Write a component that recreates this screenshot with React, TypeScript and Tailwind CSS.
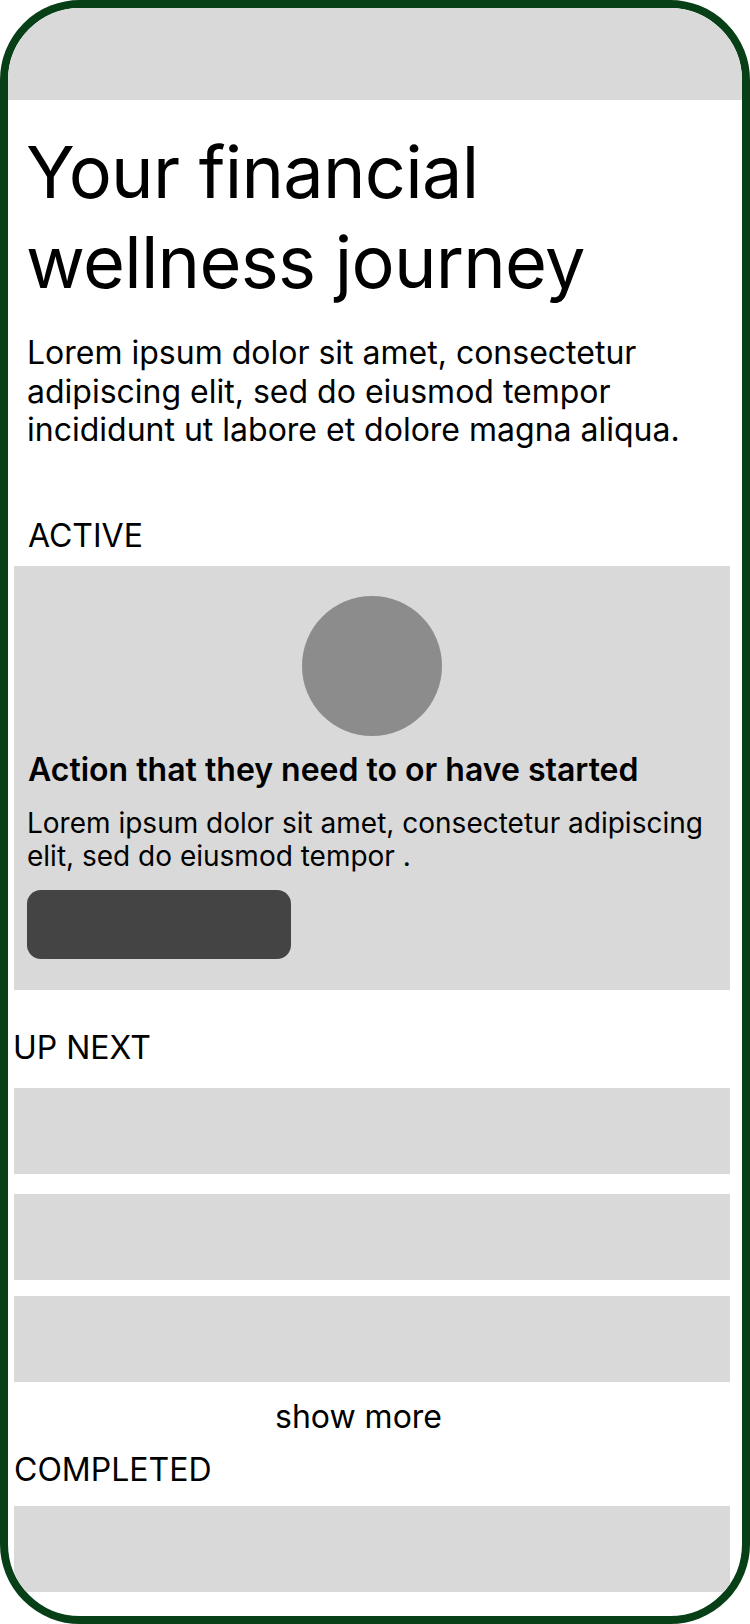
/**
 * JourneyScreen — financial wellness journey wireframe (active / up next / completed).
 */

const FONT = "font-['Inter',_'Noto_Sans',_sans-serif]";

function Placeholder({ className = "" }: { readonly className?: string }): React.ReactElement {
  return <div className={`ml-[6px] w-[716px] bg-[#d9d9d9] ${className}`} />;
}

function SectionLabel({
  children,
  className = "",
}: {
  readonly children: React.ReactNode;
  readonly className?: string;
}): React.ReactElement {
  return <p className={`text-[32px] leading-[36px] text-black ${className}`}>{children}</p>;
}

function ActiveCard(): React.ReactElement {
  return (
    <div className="ml-[6px] mt-[12px] flex w-[716px] flex-col bg-[#d9d9d9] px-[13px] pb-[31px] pt-[30px]">
      <div className="mx-auto h-[140px] w-[140px] rounded-full bg-[#8c8c8c]" />
      <h2 className="mt-[16px] pl-[1px] text-[32px] font-semibold leading-[36px] text-black">
        Action that they need to or have started
      </h2>
      <p className="mt-[19px] text-[28px] leading-[33.5px] text-black">
        Lorem ipsum dolor sit amet, consectetur adipiscing elit, sed do eiusmod tempor .
      </p>
      <button
        type="button"
        className="mt-[16px] h-[69px] w-[264px] rounded-[14px] bg-[#444444] pl-[1px]"
        aria-label="Continue"
      />
    </div>
  );
}

export default function App(): React.ReactElement {
  return (
    <div className={`${FONT} bg-white`}>
      <div className="flex h-[1624px] w-[750px] flex-col overflow-hidden rounded-[80px] border-8 border-[#073f17] bg-white">
        <div className="h-[92px] shrink-0 bg-[#d9d9d9]" />

        <h1 className="ml-[18px] mt-[27px] w-[660px] text-[72px] font-normal leading-[90px] tracking-[-0.01em] text-black">
          Your financial wellness journey
        </h1>

        <p className="ml-[19px] mt-[27px] w-[690px] text-[32px] leading-[38.5px] text-black">
          Lorem ipsum dolor sit amet, consectetur adipiscing elit, sed do eiusmod tempor
          incididunt ut labore et dolore magna aliqua.
        </p>

        <SectionLabel className="ml-[20px] mt-[68px]">ACTIVE</SectionLabel>
        <ActiveCard />

        <SectionLabel className="ml-[5px] mt-[40px]">UP NEXT</SectionLabel>
        <Placeholder className="mt-[22px] h-[86px]" />
        <Placeholder className="mt-[20px] h-[86px]" />
        <Placeholder className="mt-[16px] h-[86px]" />

        <SectionLabel className="ml-[6px] mt-[17px] w-[689px] text-center">show more</SectionLabel>

        <SectionLabel className="ml-[6px] mt-[17px]">COMPLETED</SectionLabel>
        <Placeholder className="mt-[18px] h-[86px]" />
      </div>
    </div>
  );
}
